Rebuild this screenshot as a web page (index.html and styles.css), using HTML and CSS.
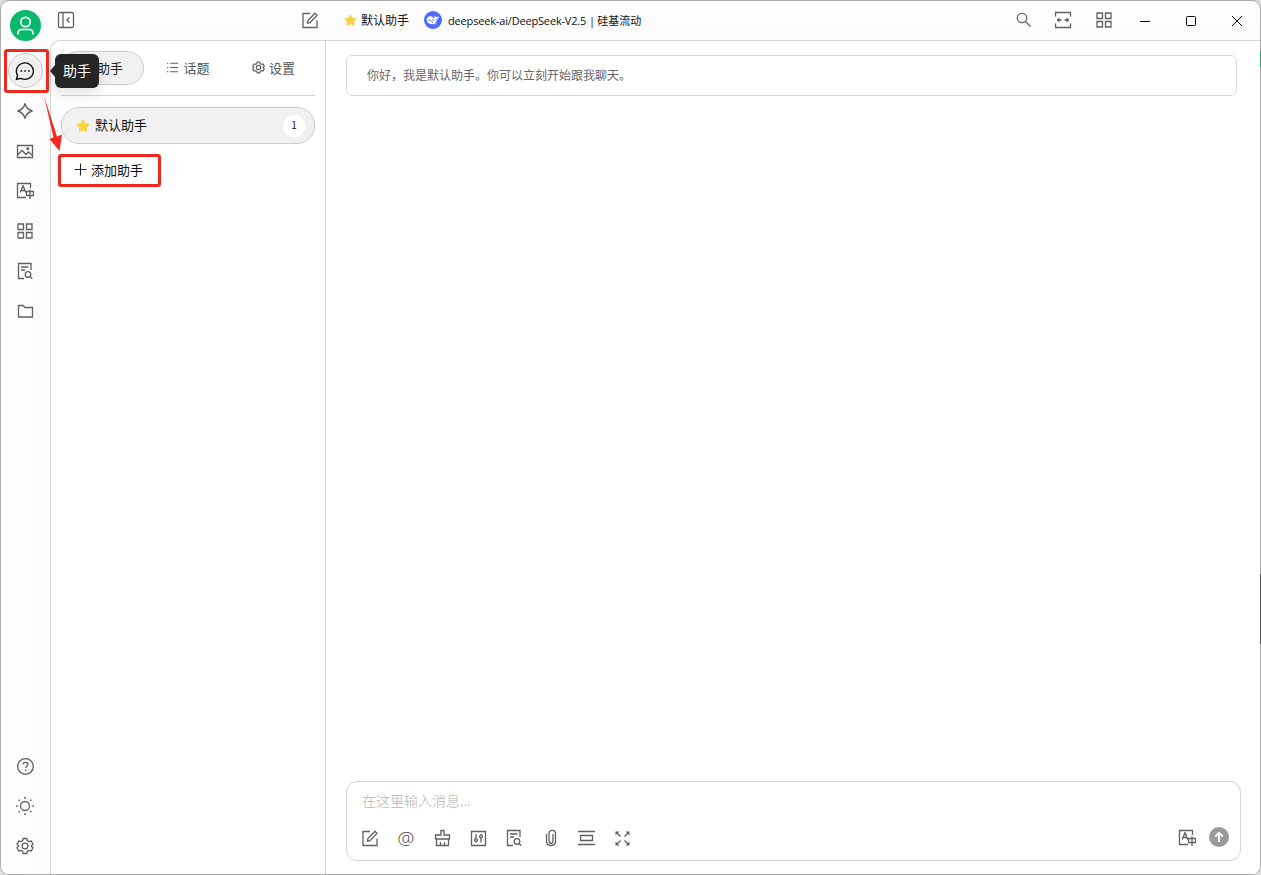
FILE: index.html
```
<!DOCTYPE html>
<html lang="zh-CN">
<head>
    <meta charset="UTF-8">
    <meta name="viewport" content="width=device-width, initial-scale=1.0">
    <title>默认助手</title>
    <link rel="stylesheet" href="styles.css">
</head>
<body>
    <!-- shared icons -->
    <svg class="sprite" width="0" height="0">
        <symbol id="i-translate" viewBox="0 0 18 18">
            <path d="M14.500 6V1.500h-13v14H10M4.200 10.500 6.800 4h.4l2.600 6.500M5.200 8.500h3.600M10.500 9.500h7v4h-7zM14 7.500v9.500"/>
        </symbol>
        <symbol id="i-apps" viewBox="0 0 18 18">
            <path d="M2 2h5.500v5.500H2zM10.500 2H16v5.500h-5.500zM2 10.500h5.500V16H2zM10.500 10.500H16V16h-5.500z"/>
        </symbol>
        <symbol id="i-doc" viewBox="0 0 18 18">
            <path d="M8 16.500H2.500v-15h12.500V8M5 5h7.500M5 8h4M14.200 14.700l2 2"/>
            <circle cx="12" cy="12.500" r="2.800"/>
        </symbol>
        <symbol id="i-edit" viewBox="0 0 18 18">
            <path d="M9 2.500H2v14h14V9.500M6.500 12.200l.4-2.600 7-7.400 2.100 2-7 7.400z"/>
        </symbol>
        <symbol id="i-gear" viewBox="0 0 18 18">
            <path d="M7.200 1.500h3.600l.6 2.200 1.600.9 2.200-.6 1.800 3.100-1.600 1.600v.6l1.600 1.600-1.800 3.100-2.200-.6-1.600.9-.6 2.200H7.200l-.6-2.200-1.600-.9-2.200.6L1 10.900l1.600-1.600v-.6L1 7.100 2.800 4l2.200.6 1.600-.9z"/>
            <circle cx="9" cy="9" r="2.900"/>
        </symbol>
        <symbol id="i-star" viewBox="0 0 14 14">
            <path d="M7 .8c.4 0 .6.2.8.6l1.300 2.900 3.300.4c.9.100 1.100.9.500 1.500l-2.300 2.200.6 3.200c.1.900-.6 1.300-1.300.9L7 11l-2.900 1.500c-.7.4-1.400 0-1.300-.9l.6-3.200L1.100 6.200C.5 5.600.7 4.800 1.600 4.700l3.300-.4 1.300-2.900c.2-.4.4-.6.8-.6z"/>
        </symbol>
    </svg>

    <div class="window">
        <header class="titlebar">
            <div class="titlebar-left">
                <svg class="icon" viewBox="0 0 18 18"><rect x="1.500" y="1.500" width="15" height="15" rx="1.500"/><path d="M6 1.500v15M12.500 6.500 10 9l2.500 2.500"/></svg>
                <svg class="icon"><use href="#i-edit"/></svg>
            </div>
            <div class="titlebar-main">
                <svg class="star star-small"><use href="#i-star"/></svg>
                <span class="assistant-name">默认助手</span>
                <svg class="model-logo" viewBox="0 0 18 18">
                    <circle cx="9" cy="9" r="9"/>
                    <path class="whale" d="M2.600 8.500C2.800 6.300 4.600 5 6.500 5.200c1.800.2 2.700 1.700 4 2.400.2-.9-.2-1.800.1-2.800.6.6 1.100 1.100 1.900 1.300.8-.1 1.500-.6 2.400-.7-.2 1.500-1.100 2.600-2.200 3-.1 1.600-.7 2.900-1.600 3.800l1.100.9c-1 .5-2 .2-2.700-.2-3.400 1-6.500-1-6.900-4.400z"/>
                    <path class="eye" d="M4.500 9c1.800-.5 3.200 1.300 4.300 2.900M8.200 8.600c.9-.3 1.600.3 1.800 1.400"/>
                </svg>
                <span class="model-name"><span class="model-id">deepseek-ai/DeepSeek-V2.5 |</span> 硅基流动</span>
            </div>
            <div class="titlebar-tools">
                <svg class="icon" viewBox="0 0 18 18"><circle cx="8" cy="7" r="4.700"/><path d="m11.500 10.500 5 5"/></svg>
                <svg class="icon" viewBox="0 0 18 18"><path d="M1.500 5.500v-4h15v4M1.500 12.500v4h15v-4M3.500 9H7.500M10.500 9h4"/><path class="solid" d="M5.500 6.500v5L2.500 9zM12.500 6.500v5L15.500 9z"/></svg>
                <svg class="icon"><use href="#i-apps"/></svg>
            </div>
            <div class="window-buttons">
                <svg class="win-icon" viewBox="0 0 12 12"><path d="M1 6.500h10"/></svg>
                <svg class="win-icon" viewBox="0 0 12 12"><rect x="1.500" y="1.500" width="9" height="9" rx="1"/></svg>
                <svg class="win-icon" viewBox="0 0 12 12"><path d="m1 1 10 10M11 1 1 11"/></svg>
            </div>
        </header>

        <nav class="sidebar">
            <div class="avatar">
                <svg viewBox="0 0 31 31"><circle cx="15.500" cy="12" r="4.700"/><path d="M8 24.500v-1c0-2.500 1.800-4 4-4h7c2.200 0 4 1.500 4 4v1"/></svg>
            </div>
            <div class="nav-item active">
                <svg class="icon icon-chat" viewBox="0 0 20 20"><path d="M1.500 18.300 2.600 14.300A8.500 8.200 0 1 1 6 17.400z"/><path class="dots" d="M5.500 10h1.700M9.300 10H11M13 10h1.700"/></svg>
            </div>
            <div class="nav-item"><svg class="icon" viewBox="0 0 18 18"><path d="M9 1.500c1 4.300 3.200 6.500 7.500 7.500-4.300 1-6.500 3.200-7.500 7.500C8 12.200 5.800 10 1.500 9 5.800 8 8 5.800 9 1.500z"/></svg></div>
            <div class="nav-item"><svg class="icon" viewBox="0 0 18 18"><path d="M1.500 3.500h15v12h-15zM2 12.500l4-4 4 4 2.500-2.500 4 3.500"/><circle cx="11.800" cy="6.800" r=".8"/></svg></div>
            <div class="nav-item"><svg class="icon"><use href="#i-translate"/></svg></div>
            <div class="nav-item"><svg class="icon"><use href="#i-apps"/></svg></div>
            <div class="nav-item"><svg class="icon"><use href="#i-doc"/></svg></div>
            <div class="nav-item"><svg class="icon" viewBox="0 0 18 18"><path d="M2.500 3.500h4.500l2 2h7.500v9.500h-14z"/></svg></div>
            <div class="nav-item nav-bottom"><svg class="icon" viewBox="0 0 18 18"><circle cx="9.500" cy="9.500" r="7.800"/><path d="M7 7.500c0-3 5-2.900 5 0 0 1.700-2.500 1.700-2.500 3.500M9.500 12.500V14"/></svg></div>
            <div class="nav-item"><svg class="icon" viewBox="0 0 18 18"><circle cx="9" cy="9" r="4.500"/><path class="rays" d="M9 0v1.700M9 16.300V18M0 9h1.700M16.300 9H18M2.700 2.700l1.100 1.100M14.200 14.200l1.100 1.100M2.700 15.300l1.100-1.100M14.200 3.800l1.100-1.100"/></svg></div>
            <div class="nav-item"><svg class="icon"><use href="#i-gear"/></svg></div>
        </nav>

        <aside class="panel">
            <div class="tabs">
                <div class="tab selected"><svg class="tab-icon"><use href="#i-star"/></svg>助手</div>
                <div class="tab"><svg class="tab-icon" viewBox="0 0 14 14"><path d="M4.500 2.500H13M4.500 7H13M4.500 11.500H13M1 2.500h1.500M1 7h1.500M1 11.500h1.500"/></svg>话题</div>
                <div class="tab"><svg class="tab-icon tab-gear"><use href="#i-gear"/></svg>设置</div>
            </div>
            <div class="assistant-item">
                <svg class="star"><use href="#i-star"/></svg>
                <span class="item-name">默认助手</span>
                <span class="count">1</span>
            </div>
            <div class="add-item">
                <svg class="plus" viewBox="0 0 12 12"><path d="M6 .5v11M.5 6h11"/></svg>
                <span>添加助手</span>
            </div>
        </aside>

        <main class="chat">
            <div class="message">你好，我是默认助手。你可以立刻开始跟我聊天。</div>
            <div class="inputbar">
                <div class="placeholder">在这里输入消息...</div>
                <div class="toolbar">
                    <svg class="icon"><use href="#i-edit"/></svg>
                    <span class="at">@</span>
                    <svg class="icon" viewBox="0 0 18 18"><path d="M8 6V1.500h3V6h5.500v4h-14V6zM3.500 10v6.500h12V10M7.500 16.500v-3.500M11.500 16.500v-3.500"/></svg>
                    <svg class="icon" viewBox="0 0 18 18"><path d="M2.500 2.500h14v14h-14zM7 5v8.500M12 5v8.500"/><circle class="knob" cx="7" cy="11" r="1.400"/><circle class="knob" cx="12" cy="7.500" r="1.400"/></svg>
                    <svg class="icon"><use href="#i-doc"/></svg>
                    <svg class="icon" viewBox="0 0 18 18"><path d="M12 5v7c0 3-4 3-4 0V4.500c0-4.200 6.500-4.200 6.500 0v7.800c0 5.600-9 5.600-9 0V5"/></svg>
                    <svg class="icon" viewBox="0 0 18 18"><path d="M1 2.500h17M1 15.500h17M3.500 6.500h12v5h-12z"/></svg>
                    <svg class="icon" viewBox="0 0 18 18"><path d="m3.500 3.500 4 4M15.500 3.500l-4 4M3.500 15.500l4-4M15.500 15.500l-4-4"/><path class="solid" d="M2.500 2.500h4l-4 4zM16.500 2.500v4l-4-4zM2.500 16.500v-4l4 4zM16.500 16.500h-4l4-4z"/></svg>
                    <div class="toolbar-right">
                        <svg class="icon"><use href="#i-translate"/></svg>
                        <svg class="send" viewBox="0 0 20 20"><circle cx="10" cy="10" r="10"/><path d="M10 15V5.800M6.300 9.500 10 5.800l3.700 3.700"/></svg>
                    </div>
                </div>
            </div>
        </main>
    </div>

    <!-- things floating over the window -->
    <div class="tooltip">助手</div>
    <div class="mark mark-chat"></div>
    <div class="mark mark-add"></div>
    <svg class="arrow" viewBox="0 0 24 60"><path d="M4 1 17 41.500l5-2L19.500 56 9.500 44l4-1.500z"/></svg>
    <div class="edge edge-green"></div>
    <div class="edge edge-dark"></div>
</body>
</html>
```
FILE: styles.css
```
* {
    box-sizing: border-box;
}
body {
    margin: 0;
    width: 1261px;
    height: 875px;
    overflow: hidden;
    background: #dcdcdc;
    font-family: "Noto Sans CJK SC", sans-serif;
    font-size: 13px;
    color: #111;
}
svg {
    display: block;
    flex: none;
}
.sprite {
    position: absolute;
}
.window {
    width: 1261px;
    height: 875px;
    border: 1px solid #aaa;
    border-radius: 9px;
    background: linear-gradient(180deg, #fff 0, #fafafa 40px, #fdfdfd 100%);
    display: grid;
    grid-template-columns: 49px 276px 1fr;
    grid-template-rows: 39px 1fr;
    overflow: hidden;
}
.icon {
    width: 18px;
    height: 18px;
    fill: none;
    stroke: #606060;
    stroke-width: 1.3;
}
.solid {
    fill: #606060;
    stroke: none;
}

/* title bar */
.titlebar {
    grid-column: 1 / 4;
    display: flex;
    align-items: center;
}
.titlebar-left {
    width: 325px;
    padding: 0 7px 2px 56px;
    display: flex;
    justify-content: space-between;
}
.titlebar-main {
    flex: 1;
    display: flex;
    align-items: center;
    padding-left: 18px;
    padding-bottom: 1px;
}
.star {
    width: 14px;
    height: 14px;
    fill: #fbd13c;
}
.star-small {
    width: 13px;
    height: 13px;
}
.assistant-name {
    font-size: 12px;
    margin: -2px 15px 0 4px;
}
.model-logo {
    width: 18px;
    height: 18px;
    margin-right: 6px;
    fill: #4d6bfe;
}
.whale {
    fill: #fff;
}
.eye {
    fill: none;
    stroke: #4d6bfe;
    stroke-width: 1;
}
.model-name {
    font-size: 11px;
    white-space: nowrap;
}
.model-id {
    font-family: "Open Sans", sans-serif;
    letter-spacing: -0.17px;
}
.titlebar-tools {
    display: flex;
    gap: 22px;
    margin-right: 26px;
    padding-bottom: 2px;
}
.titlebar-tools .icon:nth-child(2) {
    margin-right: 1px;
}
.window-buttons {
    display: flex;
    gap: 34px;
    margin-right: 17px;
}
.win-icon {
    width: 12px;
    height: 12px;
    fill: none;
    stroke: #000;
    stroke-width: 1;
}

/* sidebar */
.sidebar {
    display: flex;
    flex-direction: column;
    align-items: center;
    gap: 5px;
    padding-bottom: 11px;
    background: linear-gradient(90deg, #fff, #fafafa);
}
.avatar {
    width: 31px;
    height: 31px;
    margin-top: -30px;
    margin-bottom: 7px;
    border-radius: 50%;
    background: #08b96c;
}
.avatar svg {
    fill: none;
    stroke: #fff;
    stroke-width: 1.7;
}
.nav-item {
    width: 35px;
    height: 35px;
    padding-right: 1px;
    display: flex;
    align-items: center;
    justify-content: center;
}
.nav-item.active {
    border: 1px solid #c8c8c8;
    border-radius: 50%;
    background: #f0f0f0;
}
.icon-chat {
    width: 20px;
    height: 20px;
    stroke: #111;
    stroke-width: 1.4;
}
.rays {
    stroke-width: 1.6;
}
.nav-bottom {
    margin-top: auto;
}

/* assistants panel */
.panel {
    border: 1px solid #d4d4d4;
    border-bottom: none;
    border-top-left-radius: 10px;
    background: #fff;
    padding: 10px;
}
.tabs {
    height: 45px;
    display: flex;
    border-bottom: 1px solid #d4d4d4;
}
.tab {
    width: 83px;
    margin-right: 2.500px;
    height: 34px;
    display: flex;
    align-items: center;
    justify-content: center;
    gap: 4px;
    color: #555;
    border: 1px solid transparent;
    border-radius: 17px;
    padding-bottom: 2px;
}
.tab:last-child {
    margin-right: 0;
}
.tab.selected {
    padding-right: 2px;
    color: #222;
    border-color: #ccc;
    background: #f1f1f1;
}
.tab-icon {
    width: 13px;
    height: 13px;
    fill: none;
    stroke: #606060;
    stroke-width: 1.1;
}
.tab-gear {
    stroke-width: 1.6;
}
.assistant-item {
    height: 37px;
    margin-top: 11px;
    padding: 0 9px 0 14px;
    display: flex;
    align-items: center;
    gap: 5px;
    border: 1px solid #ccc;
    border-radius: 18px;
    background: #f1f1f1;
}
.item-name {
    margin-top: -2px;
}
.count {
    width: 22px;
    height: 22px;
    margin-left: auto;
    border-radius: 50%;
    background: #fff;
    font-size: 10px;
    line-height: 20px;
    text-align: center;
}
.add-item {
    height: 35px;
    margin-top: 8px;
    padding-left: 13px;
    display: flex;
    align-items: center;
    gap: 4px;
}
.plus {
    width: 13px;
    height: 13px;
    fill: none;
    stroke: #222;
    stroke-width: 1;
}

/* chat */
.chat {
    border-top: 1px solid #d4d4d4;
    background: #fff;
    display: flex;
    flex-direction: column;
    justify-content: space-between;
    padding: 14px 19px 13px 20px;
}
.message {
    height: 41px;
    margin-right: 4px;
    padding-left: 20px;
    border: 1px solid #d9d9d9;
    border-radius: 6px;
    font-size: 12px;
    line-height: 38px;
    color: #666;
}
.inputbar {
    height: 80px;
    padding: 8px 11px 0 15px;
    border: 1px solid #d4d4d4;
    border-radius: 11px;
}
.placeholder {
    font-size: 14px;
    font-weight: 300;
    line-height: 20px;
    color: #b4b4b4;
}
.toolbar {
    display: flex;
    align-items: center;
    gap: 18px;
    height: 20px;
    margin: 18px 0 0 -1px;
}
.at {
    width: 18px;
    display: flex;
    justify-content: center;
    font-family: "Open Sans", sans-serif;
    font-size: 19px;
    font-weight: 300;
    line-height: 16px;
    color: #444;
}
.toolbar-right {
    display: flex;
    align-items: center;
    gap: 13px;
    margin-left: auto;
}
.knob {
    fill: #fff;
}
.send {
    width: 20px;
    height: 20px;
    margin-top: -3px;
    fill: #999;
}
.send path {
    fill: none;
    stroke: #fff;
    stroke-width: 2;
}

/* overlays */
.tooltip {
    position: absolute;
    left: 55px;
    top: 54px;
    width: 44px;
    height: 34px;
    border-radius: 6px;
    background: #262626;
    color: #fff;
    font-size: 14px;
    line-height: 32px;
    text-align: center;
    box-shadow: 0 6px 16px rgba(0, 0, 0, 0.12);
}
.tooltip::before {
    content: "";
    position: absolute;
    left: -5px;
    top: 11px;
    border: 6px solid transparent;
    border-left: none;
    border-right: 5px solid #262626;
}
.mark {
    position: absolute;
    border: 3px solid #ee2a20;
    border-radius: 3px;
}
.mark-chat {
    left: 4px;
    top: 49px;
    width: 45px;
    height: 44px;
}
.mark-add {
    left: 58px;
    top: 154px;
    width: 103px;
    height: 33px;
}
.arrow {
    position: absolute;
    left: 40px;
    top: 95px;
    width: 24px;
    height: 60px;
    fill: #f7291c;
}
.edge {
    position: absolute;
    left: 1260px;
    width: 1px;
}
.edge-green {
    top: 51px;
    height: 16px;
    background: #2f9e6e;
}
.edge-dark {
    top: 574px;
    height: 70px;
    background: #555;
}
```
